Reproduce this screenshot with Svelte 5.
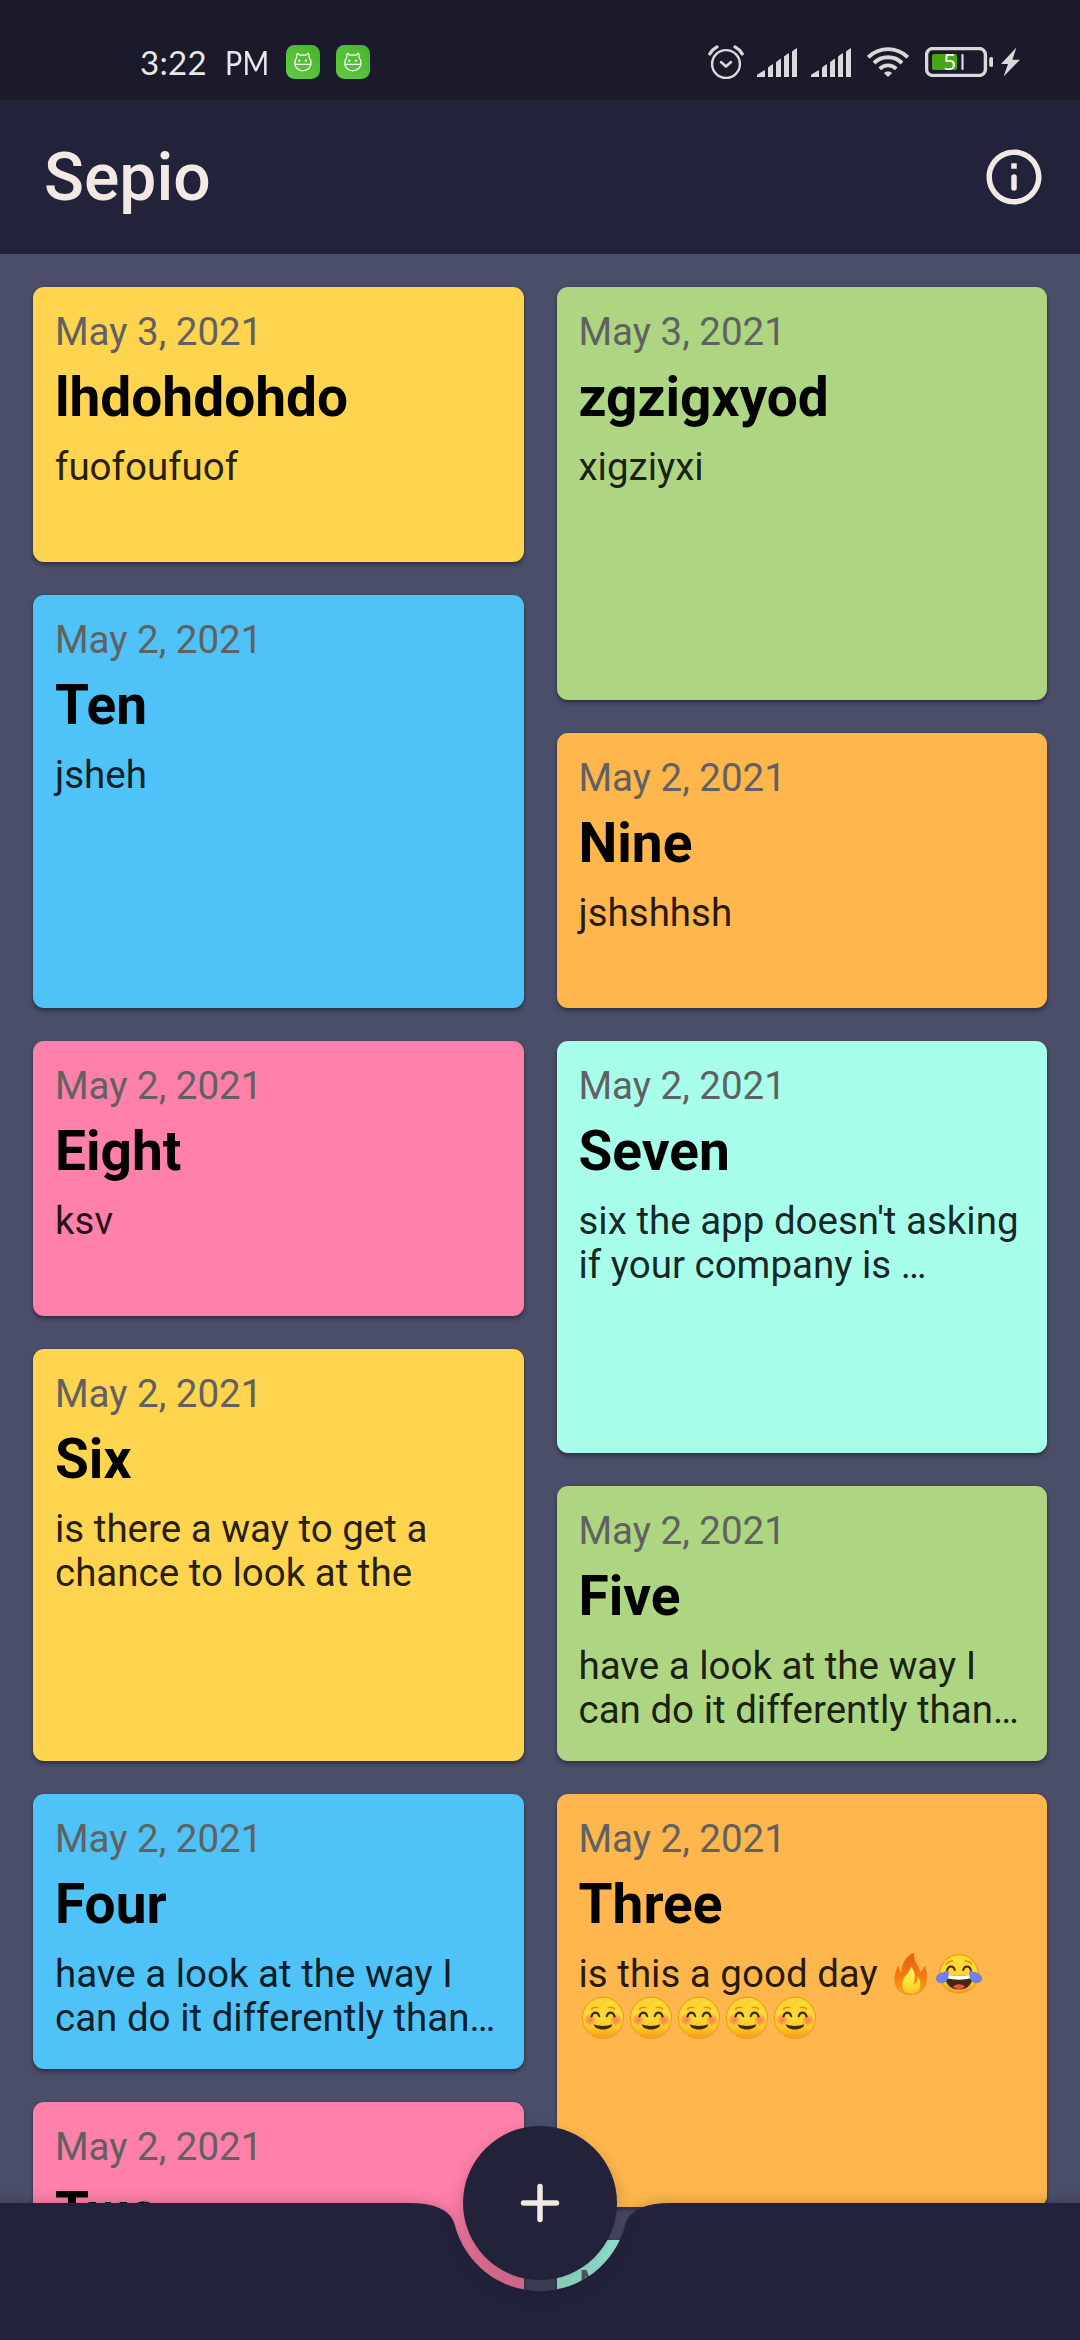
<script>
  const left = [
    { date: 'May 3, 2021', title: 'lhdohdohdo', lines: ['fuofoufuof'], color: 'yellow', tall: false },
    { date: 'May 2, 2021', title: 'Ten', lines: ['jsheh'], color: 'blue', tall: true },
    { date: 'May 2, 2021', title: 'Eight', lines: ['ksv'], color: 'pink', tall: false },
    { date: 'May 2, 2021', title: 'Six', lines: ['is there a way to get a', 'chance to look at the'], color: 'yellow', tall: true },
    { date: 'May 2, 2021', title: 'Four', lines: ['have a look at the way I', 'can do it differently than…'], color: 'blue', tall: false },
    { date: 'May 2, 2021', title: 'Two', lines: [], color: 'pink', tall: true }
  ];
  const right = [
    { date: 'May 3, 2021', title: 'zgzigxyod', lines: ['xigziyxi'], color: 'green', tall: true },
    { date: 'May 2, 2021', title: 'Nine', lines: ['jshshhsh'], color: 'orange', tall: false },
    { date: 'May 2, 2021', title: 'Seven', lines: ["six the app doesn't asking", 'if your company is …'], color: 'teal', tall: true },
    { date: 'May 2, 2021', title: 'Five', lines: ['have a look at the way I', 'can do it differently than…'], color: 'green', tall: false },
    {
      date: 'May 2, 2021', title: 'Three', color: 'orange', tall: true,
      lines: ['is this a good day ', ''],
      emoji: [['fire', 'joy'], ['smile', 'smile', 'smile', 'smile', 'smile']]
    },
    { date: 'May 2, 2021', title: '', lines: [], color: 'teal', tall: false }
  ];
  const columns = [left, right];
</script>

<svg class="defs" width="0" height="0" aria-hidden="true">
  <defs>
    <linearGradient id="face" x1="0" y1="0" x2="0" y2="1">
      <stop offset="0.5" stop-color="#fdd835" />
      <stop offset="0.72" stop-color="#fcc92c" />
      <stop offset="0.92" stop-color="#f9a825" />
    </linearGradient>
    <radialGradient id="blush">
      <stop offset="0" stop-color="#ff7043" stop-opacity=".85" />
      <stop offset="0.5" stop-color="#ff7555" stop-opacity=".65" />
      <stop offset="1" stop-color="#ff8a65" stop-opacity="0" />
    </radialGradient>
    <linearGradient id="flame" x1="0" y1="0" x2="0" y2="1">
      <stop offset="0" stop-color="#e65f0c" />
      <stop offset="0.5" stop-color="#f4770f" />
      <stop offset="1" stop-color="#ffa712" />
    </linearGradient>
    <linearGradient id="flameIn" x1="0" y1="0" x2="0" y2="1">
      <stop offset="0" stop-color="#fff176" />
      <stop offset="0.6" stop-color="#fde531" />
      <stop offset="1" stop-color="#fbc02d" />
    </linearGradient>
    <linearGradient id="badgeGreen" x1="0" y1="1" x2="1" y2="0">
      <stop offset="0" stop-color="#5fcb42" />
      <stop offset="1" stop-color="#47b52c" />
    </linearGradient>
  </defs>
</svg>

{#snippet catIcon()}
  <svg class="cat" viewBox="0 0 34 34">
    <rect width="34" height="34" rx="8.5" fill="url(#badgeGreen)" />
    <g fill="none" stroke="#fff" stroke-width="1.2" stroke-linejoin="round">
      <path d="M10.7 12.6 L10.9 9.2 Q11 8.2 12 8.5 L14 10.2 H19.8 L21.7 8.5 Q22.8 8.2 22.9 9.2 L23.1 12.6 C25.6 15.4 25.8 20.3 22.7 23.5 C19.4 26.6 14.4 26.6 11 23.5 C8 20.3 8.2 15.4 10.7 12.6 Z" />
      <path d="M8.6 19.4 H25.2 M12.2 15.6 h2.2 M13.3 14.5 v2.2 M18.8 15.6 h2.2 M19.9 14.5 v2.2" />
    </g>
  </svg>
{/snippet}

{#snippet signal()}
  <svg class="signal" viewBox="0 0 40 29" fill="#d9d9db">
    <path d="M0 29 V27.4 Q0 26.8 .5 26.5 L7 22.4 Q8 21.9 8 23 V29 Z" />
    <path d="M11 29 V19.6 L15 16.4 Q16 15.8 16 17 V29 Z" />
    <path d="M19 29 V14.2 L23 11 Q24 10.4 24 11.5 V29 Z" />
    <path d="M27 29 V8.4 L31 5.4 Q32 4.8 32 6 V29 Z" />
    <path d="M35 29 V3.4 L39 .4 Q40 -.2 40 1 V29 Z" />
  </svg>
{/snippet}

{#snippet emojiIcon(kind)}
  <svg class="emoji" viewBox="0 0 48 44">
    {#if kind === 'fire'}
      <path d="M26.8 1 C27.3 5.5 26.8 8.5 30 12.5 C32 15 32.5 18.5 32.6 21 C35.3 19.6 36.7 17 37.6 14 C40.2 20.5 40.2 27.5 38.4 32.5 C36.2 39.5 30.4 42.5 23.8 42.5 C16 42.5 9.4 38.4 8.2 30.5 C7 24 9.2 18 11.4 14.2 C11.9 17.7 12.7 19.6 14.8 21.2 C14.8 10.8 19.1 4.2 26.8 1 Z" fill="url(#flame)" stroke="#e8760f" stroke-width=".6" />
      <path d="M23.9 14.8 C23.7 20.2 15.2 24.6 15.2 32.6 C15.2 38.3 19 41.6 24 41.6 C29.5 41.6 33.4 38.3 33.4 32.4 C33.4 28.6 32 26.4 30.4 24 C31 28 29.6 31.4 26.3 32.8 C29 25.8 28.3 19.4 23.9 14.8 Z" fill="url(#flameIn)" />
    {:else if kind === 'joy'}
      <circle cx="24" cy="21.8" r="19.2" fill="url(#face)" stroke="#eb8f00" stroke-width="1" />
      <path d="M11.3 12.2 C13 9.6 15.2 8.8 18 9 M36.7 12.2 C35 9.6 32.8 8.8 30 9" fill="none" stroke="#eb8f00" stroke-width="1.4" stroke-linecap="round" />
      <path d="M12 18.4 C13.3 13.3 18.5 13 19.8 18 M28.2 18 C29.5 13 34.7 13.3 36 18.4" fill="none" stroke="#422b0d" stroke-width="2" stroke-linecap="round" />
      <path d="M10 22.4 Q24 25.2 38 22.4 C38.3 31.7 32.7 37.3 24 37.3 C15.3 37.3 9.7 31.7 10 22.4 Z" fill="#422b0d" />
      <path d="M10.2 22.4 Q24 25.2 37.8 22.4 Q38 25.2 36.6 26.3 Q24 29 11.4 26.3 Q10 25.2 10.2 22.4 Z" fill="#fff" />
      <path d="M17.8 35.1 C19.7 31.2 28.3 31.2 30.2 35.1 Q24 38.8 17.8 35.1 Z" fill="#ef5350" />
      <path d="M13 18.6 C14.2 26.4 11.8 30.8 6 30.7 C.4 30.2 -.2 24.9 3.9 22.2 C6.8 20.3 10.2 20.6 13 18.6 Z M35 18.6 C33.8 26.4 36.2 30.8 42 30.7 C47.6 30.2 48.2 24.9 44.1 22.2 C41.2 20.3 37.8 20.6 35 18.6 Z" fill="#6f83ee" stroke="#5c6fd8" stroke-width=".6" />
    {:else}
      <circle cx="24" cy="21.8" r="20.5" fill="url(#face)" stroke="#f2960a" stroke-width="1" />
      <circle cx="11" cy="24" r="6.3" fill="url(#blush)" />
      <circle cx="37" cy="24" r="6.3" fill="url(#blush)" />
      <path d="M12.4 13.2 C13.8 11.3 16 10.7 19 11.6 M35.6 13.2 C34.2 11.3 32 10.7 29 11.6" fill="none" stroke="#eb8f00" stroke-width="1.5" stroke-linecap="round" />
      <path d="M12.4 20.5 C13.8 15.4 18.9 15.4 20.3 20.3 M27.7 20.3 C29.1 15.4 34.2 15.4 35.6 20.5" fill="none" stroke="#422b0d" stroke-width="2.1" stroke-linecap="round" />
      <path d="M15 28.3 C20 30.4 28 30.4 33 28.3 C33.6 31 29.2 33.6 24 33.6 C18.8 33.6 14.4 31 15 28.3 Z" fill="#422b0d" />
    {/if}
  </svg>
{/snippet}

<div class="screen">
  <header class="status">
    <div class="group">
      <span class="time">3:22 <span class="pm">PM</span></span>
      {@render catIcon()}
      {@render catIcon()}
    </div>
    <div class="group icons">
      <svg class="alarm" viewBox="0 0 36 36" fill="none" stroke="#d9d9db" stroke-linecap="round">
        <circle cx="18" cy="20" r="13.9" stroke-width="2.4" />
        <path d="M13 18 L18 22.5 L23 18" stroke-width="2.5" stroke-linejoin="round" />
        <path d="M1.8 9.8 Q4.6 5.2 9 2.9 M34.2 9.8 Q31.4 5.2 27 2.9" stroke-width="3.3" />
      </svg>
      {@render signal()}
      {@render signal()}
      <svg class="wifi" viewBox="0 0 42 30" fill="none" stroke="#d9d9db" stroke-width="3.9">
        <path d="M1.2 10.3 C12.2 -.6 29.8 -.6 40.8 10.3" />
        <path d="M7 16 C14.8 8.3 27.2 8.3 35 16" />
        <path d="M12.8 21.8 C17.4 17.2 24.6 17.2 29.2 21.8" />
        <path d="M21 30 L16.9 26.1 Q21 22.2 25.1 26.1 Z" fill="#d9d9db" stroke="none" />
      </svg>
      <svg class="battery" viewBox="0 0 68 30">
        <rect x="1.6" y="1.6" width="58.8" height="26.8" rx="6" fill="none" stroke="#d9d9db" stroke-width="3.4" />
        <rect x="7" y="7" width="25" height="16" rx="2" fill="#48a518" />
        <rect x="64.2" y="10" width="4" height="10" rx="2" fill="#d9d9db" />
        <text x="18.6" y="22.5">5</text>
        <rect x="36.4" y="7" width="2.2" height="16" rx="1" fill="#d9d9db" />
      </svg>
      <svg class="bolt" viewBox="0 0 19 30" fill="#d9d9db">
        <path d="M15.4 .5 L0 17 H7 L2.6 29.5 L19 12.8 H11.4 Z" />
      </svg>
    </div>
  </header>

  <nav class="appbar">
    <h1>Sepio</h1>
    <svg class="info" viewBox="0 0 24 24" fill="#f2e9e4">
      <path d="M12 2C6.48 2 2 6.48 2 12s4.480 10 10 10 10-4.480 10-10S17.520 2 12 2zm0 18c-4.410 0-8-3.590-8-8s3.590-8 8-8 8 3.590 8 8-3.590 8-8 8z" />
      <rect x="11" y="7" width="2" height="2" />
      <rect x="11" y="11" width="2" height="6" rx="1" />
    </svg>
  </nav>

  <main class="board">
    {#each columns as column}
      <div class="column">
        {#each column as note}
          <article class="card {note.color}" class:tall={note.tall}>
            <div class="date">{note.date}</div>
            {#if note.title}<h2>{note.title}</h2>{/if}
            {#each note.lines as line, i}
              <p>{line}{#if note.emoji}{#each note.emoji[i] as kind}{@render emojiIcon(kind)}{/each}{/if}</p>
            {/each}
          </article>
        {/each}
      </div>
    {/each}
  </main>

  <footer class="bottom">
    <svg class="bar" viewBox="0 0 1080 138">
      <path d="M0 0 H408 Q449.250 0 454.670 21.500 A88 88 0 0 0 625.330 21.500 Q630.750 0 672 0 H1080 V138 H0 Z" fill="#22223b" />
    </svg>
    <button class="fab" aria-label="Add note">
      <svg viewBox="0 0 24 24" fill="none" stroke="#f2e9e4" stroke-width="2" stroke-linecap="round">
        <path d="M6 12 H18 M12 6 V18" />
      </svg>
    </button>
  </footer>
</div>

<style>
  :global(body) {
    background: #4a4e69;
  }

  .defs {
    position: absolute;
  }

  .screen {
    position: relative;
    width: 1080px;
    height: 2340px;
    overflow: hidden;
    display: flex;
    flex-direction: column;
    background: #4a4e69;
    font-family: Roboto, sans-serif;
  }

  .status {
    flex: none;
    box-sizing: border-box;
    height: 100px;
    padding: 24px 60px 0 140px;
    display: flex;
    justify-content: space-between;
    align-items: center;
    background: #1a1a2b;
  }

  .group {
    display: flex;
    align-items: center;
  }

  .time {
    width: 146px;
    font: 400 33px/40px Lato, sans-serif;
    letter-spacing: 0.3px;
    color: #e8e8ea;
    white-space: nowrap;
  }

  .pm {
    display: inline-block;
    margin-left: 9px;
    transform: scaleX(0.87);
    transform-origin: left center;
  }

  .cat {
    width: 34px;
    height: 34px;
    margin-right: 16px;
  }

  .icons svg {
    display: block;
  }

  .alarm {
    width: 36px;
    height: 36px;
    margin-right: 13px;
  }

  .signal {
    width: 40px;
    height: 29px;
    margin-right: 14px;
  }

  .wifi {
    width: 42px;
    height: 30px;
    margin: 0 16px 0 2px;
  }

  .battery {
    width: 68px;
    height: 30px;
    margin-right: 8px;
  }

  .battery text {
    font: 400 22px 'Open Sans', sans-serif;
    fill: #fff;
  }

  .bolt {
    width: 19px;
    height: 30px;
  }

  .appbar {
    flex: none;
    box-sizing: border-box;
    height: 154px;
    padding: 0 33px 0 44px;
    display: flex;
    justify-content: space-between;
    align-items: center;
    background: #22223b;
  }

  h1 {
    margin: 0;
    font-size: 66px;
    line-height: 77px;
    font-weight: 500;
    color: #f2e9e4;
  }

  .info {
    width: 66px;
    height: 66px;
  }

  .board {
    flex: 1;
    min-height: 0;
    padding: 33px;
    display: grid;
    grid-template-columns: 1fr 1fr;
    gap: 33px;
  }

  .column {
    display: flex;
    flex-direction: column;
    gap: 33px;
    min-width: 0;
  }

  .card {
    flex: none;
    box-sizing: border-box;
    height: 275px;
    padding: 22px;
    border-radius: 11px;
    box-shadow: 0 3px 4px rgba(0, 0, 0, 0.34), 0 0 2px rgba(0, 0, 0, 0.15);
  }

  .card.tall {
    height: 412.5px;
  }

  .yellow { background: #ffd54f; }
  .green { background: #aed581; }
  .blue { background: #4fc3f7; }
  .orange { background: #ffb74d; }
  .pink { background: #ff80ab; }
  .teal { background: #a7ffeb; }

  .date {
    font-size: 38.5px;
    line-height: 45px;
    color: #616161;
  }

  h2 {
    margin: 11px 0 16px;
    font-size: 55px;
    line-height: 64px;
    font-weight: 700;
    color: #000;
  }

  p {
    margin: 0;
    height: 44px;
    font-size: 38.5px;
    line-height: 44px;
    color: rgba(0, 0, 0, 0.87);
    white-space: pre;
    display: flex;
  }

  .emoji {
    flex: none;
    width: 48px;
    height: 44px;
  }

  .bottom {
    position: absolute;
    left: 0;
    bottom: 0;
    width: 1080px;
    height: 137.5px;
  }

  .bar {
    display: block;
    width: 1080px;
    height: 138px;
    overflow: visible;
    filter: drop-shadow(0 -1px 7px rgba(0, 0, 0, 0.2));
  }

  .fab {
    position: absolute;
    left: 463px;
    top: -77px;
    width: 154px;
    height: 154px;
    padding: 0;
    border: 0;
    border-radius: 50%;
    display: grid;
    place-items: center;
    background: #22223b;
    box-shadow: 0 9px 18px rgba(0, 0, 0, 0.25);
  }

  .fab svg {
    width: 66px;
    height: 66px;
  }
</style>
